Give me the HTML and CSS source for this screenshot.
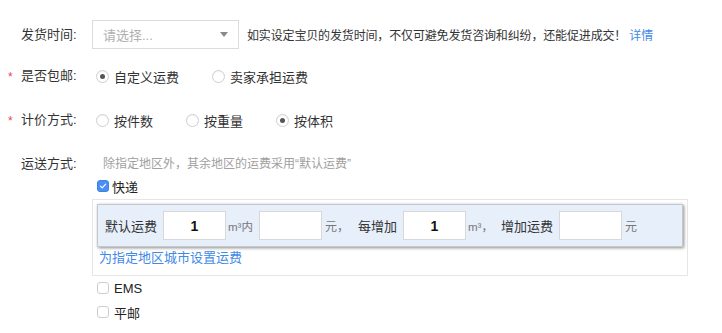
FILE: index.html
```html
<!DOCTYPE html>
<html lang="zh-CN">
<head>
<meta charset="utf-8">
<title>运费设置</title>
<link rel="stylesheet" href="styles.css">
</head>
<body>
<div class="form">
  <div class="row row-time">
    <div class="label"><span class="req"></span>发货时间:</div>
    <div class="select"><span class="ph">请选择...</span><span class="caret"></span></div>
    <span class="tip">如实设定宝贝的发货时间，不仅可避免发货咨询和纠纷，还能促进成交！<a class="link more">详情</a></span>
  </div>

  <div class="row row-free">
    <div class="label"><span class="req">*</span>是否包邮:</div>
    <div class="options">
      <label class="opt"><span class="radio checked"></span>自定义运费</label>
      <label class="opt"><span class="radio"></span>卖家承担运费</label>
    </div>
  </div>

  <div class="row row-price">
    <div class="label"><span class="req">*</span>计价方式:</div>
    <div class="options">
      <label class="opt"><span class="radio"></span>按件数</label>
      <label class="opt"><span class="radio"></span>按重量</label>
      <label class="opt"><span class="radio checked"></span>按体积</label>
    </div>
  </div>

  <div class="row-ship">
    <div class="label"><span class="req"></span>运送方式:</div>
    <div class="ship">
      <div class="ship-hint">除指定地区外，其余地区的运费采用“默认运费”</div>
      <label class="check-row"><span class="check on"><svg viewBox="0 0 12 12" width="12" height="12"><path d="M3 6.2 L5.1 8.3 L9.2 3.8" fill="none" stroke="#fff" stroke-width="1.4" stroke-linecap="round" stroke-linejoin="round"/></svg></span>快递</label>
      <div class="box">
        <div class="panel">
          <span class="t">默认运费</span>
          <span class="inp">1</span>
          <span class="u u1">m³内</span>
          <span class="inp"></span>
          <span class="u u2">元，</span>
          <span class="t t2">每增加</span>
          <span class="inp">1</span>
          <span class="u u3">m³，</span>
          <span class="t t3">增加运费</span>
          <span class="inp"></span>
          <span class="u u4">元</span>
        </div>
        <a class="link area">为指定地区城市设置运费</a>
      </div>
      <label class="check-row ems"><span class="check"></span>EMS</label>
      <label class="check-row post"><span class="check"></span>平邮</label>
    </div>
  </div>
</div>
</body>
</html>
```

FILE: styles.css
```css
* { box-sizing: border-box; }
html, body { margin: 0; padding: 0; background: #fff; }
body {
  font-family: "Liberation Sans", "Noto Sans CJK SC", sans-serif;
  font-size: 13px;
  color: #333;
  width: 722px;
  height: 333px;
  overflow: hidden;
}
.form { padding-top: 20px; }
.row { display: flex; align-items: center; }
.label {
  width: 92px;
  flex: none;
  display: flex;
  align-items: center;
  font-size: 13px;
  color: #333;
  line-height: 20px;
}
.req {
  width: 21px;
  padding-left: 8px;
  color: #f0455a;
  font-size: 12px;
  position: relative;
  top: 1px;
}
.row-time { height: 29px; }
.select {
  width: 147px;
  height: 29px;
  border: 1px solid #dcdcdc;
  display: flex;
  align-items: center;
  justify-content: space-between;
  padding: 0 10px 0 10px;
  flex: none;
}
.ph { color: #b0b0b0; font-size: 13px; }
.caret {
  width: 0; height: 0;
  border-left: 4.5px solid transparent;
  border-right: 4.5px solid transparent;
  border-top: 5px solid #8a8a8a;
}
.tip { margin-left: 8px; font-size: 12px; color: #333; letter-spacing: -0.15px; }
.link { color: #3f8ae6; text-decoration: none; }
.more { margin-left: 3px; letter-spacing: 0; }

.row-free { height: 28px; margin-top: 13px; }
.row-price { height: 28px; margin-top: 16px; }
.options { display: flex; align-items: center; padding-left: 4px; }
.opt { display: flex; align-items: center; margin-right: 33px; font-size: 13px; color: #333; }
.radio {
  width: 13px; height: 13px;
  border: 1px solid #cfcfcf;
  border-radius: 50%;
  background: #fff;
  margin-right: 5px;
  display: flex; align-items: center; justify-content: center;
  box-shadow: inset 0 1px 1px rgba(0,0,0,0.05);
}
.radio.checked::after {
  content: "";
  width: 5px; height: 5px;
  border-radius: 50%;
  background: #555;
}

.row-ship { display: flex; margin-top: 20px; }
.row-ship .label { align-self: flex-start; }
.ship { flex: none; width: 596px; }
.ship-hint { line-height: 20px; padding-left: 11px; font-size: 12px; color: #a0a0a0; }
.check-row { display: flex; align-items: center; height: 20px; padding-left: 5px; font-size: 13px; color: #222; }
.ship-hint + .check-row { margin-top: 2px; }
.check {
  width: 12px; height: 12px;
  border: 1px solid #cdcdcd;
  border-radius: 3px;
  background: #fff;
  margin-right: 3px;
  display: flex; align-items: center; justify-content: center;
}
.check.on { background: #4b8ef3; border-color: #3f82e6; }
.check svg { display: block; }
.ems, .post { padding-left: 5px; }
.ems .check, .post .check { margin-right: 5px; }
.ems { margin-top: 2px; }
.post { margin-top: 4px; }

.box {
  margin-top: 3px;
  border: 1px solid #e6e6e6;
  padding: 4px 4px 7px 4px;
  height: 77px;
}
.panel {
  height: 43px;
  background: #e7effb;
  border: 1px solid #c4c7cc;
  box-shadow: 1px 1px 3px rgba(0,0,0,0.45);
  display: flex;
  align-items: center;
  padding-left: 7px;
}
.t { font-size: 13px; color: #333; }
.inp {
  width: 63px; height: 29px;
  background: #fff;
  border: 1px solid #d8d8d8;
  display: flex; align-items: center; justify-content: center;
  font-size: 14px; font-weight: 600; color: #111;
  margin-left: 6px;
}
.t2 + .inp { margin-left: 6px; }
.t3 + .inp { margin-left: 6px; }
.u { font-size: 11px; color: #777; margin-left: 2px; }
.u1 { margin-right: 0; font-size: 11.5px; }
.u2 { font-size: 12px; margin-left: 3px; }
.t2 { margin-left: 9px; }
.u3 { margin-left: 2px; font-size: 11.5px; }
.t3 { margin-left: 8px; }
.u4 { font-size: 12px; margin-left: 3px; }
.area { display: block; line-height: 20px; margin-top: 1px; padding-left: 2px; font-size: 13px; }
```
